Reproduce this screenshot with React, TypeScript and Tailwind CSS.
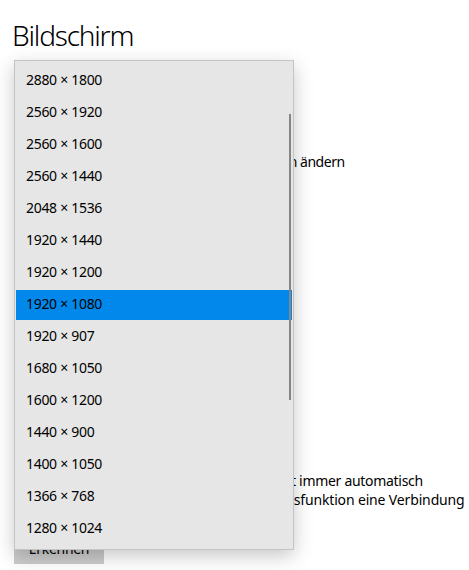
import React from "react";

const resolutions = [
  "2880 × 1800",
  "2560 × 1920",
  "2560 × 1600",
  "2560 × 1440",
  "2048 × 1536",
  "1920 × 1440",
  "1920 × 1200",
  "1920 × 1080",
  "1920 × 907",
  "1680 × 1050",
  "1600 × 1200",
  "1440 × 900",
  "1400 × 1050",
  "1366 × 768",
  "1280 × 1024",
];

export default function App() {
  const selected = "1920 × 1080";
  return (
    <div
      className="relative w-[469px] h-[570px] overflow-hidden bg-white text-[#000]"
      style={{ fontFamily: '"Noto Sans", "Open Sans", sans-serif' }}
    >
      {/* underlying settings page */}
      <div className="flex flex-col pl-[12px]">
        <h1 className="mt-[17px] text-[28px] leading-[36px] font-light tracking-[-1.2px]">Bildschirm</h1>
        <div className="mt-[99px] pl-[4px] text-[14px] leading-[20px] tracking-[-0.5px] whitespace-nowrap">
          Größe von Text, Apps und anderen Elementen ändern
        </div>
        <div className="mt-[299px] pl-[4px] text-[14px] leading-[19px] tracking-[-0.3px] whitespace-nowrap">
          <div>Manche der älteren Bildschirme stellen nicht immer automatisch</div>
          <div className="tracking-[-0.15px]">her. Versuchen Sie bitte, mit der Erkennungsfunktion eine Verbindung</div>
          <div>herzustellen.</div>
        </div>
        <button className="mt-[4px] ml-[2px] w-[90px] h-[32px] bg-[#cccccc] text-[14px] tracking-[-0.3px] text-[#000]">
          Erkennen
        </button>
      </div>

      {/* dropdown list */}
      <div className="absolute left-[14px] top-[60px] w-[280px] h-[490px] border border-[#c4c4c4] bg-[#e6e6e6] shadow-[0_6px_18px_rgba(0,0,0,0.22)]">
        <div className="relative flex flex-col pt-[4px] pb-[4px] pl-[1px] pr-[1px]">
          {resolutions.map((r) => (
            <div
              key={r}
              className={
                r === selected
                  ? "my-[1px] h-[30px] flex items-center pl-[10px] pb-[4px] text-[14px] tracking-[-0.3px] bg-[#0288ea] text-black"
                  : "my-[1px] h-[30px] flex items-center pl-[10px] pb-[4px] text-[14px] tracking-[-0.3px] text-black"
              }
            >
              {r}
            </div>
          ))}
          <div className="absolute right-[2px] top-[53px] w-[2px] h-[286px] bg-[#858585]" />
        </div>
      </div>
    </div>
  );
}
